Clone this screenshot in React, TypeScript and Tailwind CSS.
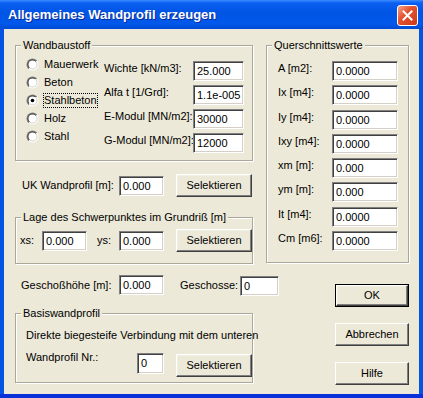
import React from 'react';

const ui = "font-['Liberation_Sans',Arial,sans-serif] text-[11px] leading-[13px] text-black";

function Edit({ value, className }: { value: string; className: string }) {
  return (
    <div
      className={`h-[20px] shrink-0 bg-white border border-t-[#808080] border-l-[#808080] border-b-white border-r-white shadow-[inset_1px_1px_0_#404040,inset_-1px_-1px_0_#d4d0c8] pl-[3px] leading-[18px] ${className}`}
    >
      {value}
    </div>
  );
}

function Btn({ children, isDefault }: { children: React.ReactNode; isDefault?: boolean }) {
  const face = (
    <div className="h-full w-full flex items-center justify-center bg-[#ece9d8] border border-t-white border-l-white border-r-[#404040] border-b-[#404040] shadow-[inset_-1px_-1px_0_#808080,inset_1px_1px_0_#f1efe2]">
      {children}
    </div>
  );
  if (isDefault) {
    return <div className="w-[74px] h-[23px] border border-black">{face}</div>;
  }
  return <div className="w-[76px] h-[23px]">{face}</div>;
}

function Radio({ checked }: { checked?: boolean }) {
  return (
    <svg width="13" height="13" viewBox="0 0 13 13" className="shrink-0">
      <defs>
        <linearGradient id="ro" x1="0" y1="0" x2="1" y2="1">
          <stop offset="0.5" stopColor="#808080" />
          <stop offset="0.5" stopColor="#ffffff" />
        </linearGradient>
        <linearGradient id="ri" x1="0" y1="0" x2="1" y2="1">
          <stop offset="0.5" stopColor="#404040" />
          <stop offset="0.5" stopColor="#d4d0c8" />
        </linearGradient>
      </defs>
      <circle cx="6.5" cy="6.5" r="6" fill="url(#ro)" />
      <circle cx="6.5" cy="6.5" r="5" fill="url(#ri)" />
      <circle cx="6.5" cy="6.5" r="4" fill="#ffffff" />
      {checked && <circle cx="6.5" cy="6.5" r="1.8" fill="#000000" />}
    </svg>
  );
}

function Group({ title, className, children }: { title: string; className: string; children: React.ReactNode }) {
  return (
    <div className={`relative border border-[#aca899] shadow-[inset_1px_1px_0_#ffffff,1px_1px_0_#ffffff] ${className}`}>
      <span className="absolute -top-[7px] left-[5px] px-[2px] bg-[#ece9d8] leading-[13px] whitespace-nowrap">{title}</span>
      {children}
    </div>
  );
}

const materials = ['Mauerwerk', 'Beton', 'Stahlbeton', 'Holz', 'Stahl'];

const props = [
  ['Wichte [kN/m3]:', '25.000'],
  ['Alfa t [1/Grd]:', '1.1e-005'],
  ['E-Modul [MN/m2]:', '30000'],
  ['G-Modul [MN/m2]:', '12000'],
];

const section = [
  ['A [m2]:', '0.0000'],
  ['Ix [m4]:', '0.0000'],
  ['Iy [m4]:', '0.0000'],
  ['Ixy [m4]:', '0.0000'],
  ['xm [m]:', '0.000'],
  ['ym [m]:', '0.000'],
  ['It [m4]:', '0.0000'],
  ['Cm [m6]:', '0.0000'],
];

function SideBtn({ children }: { children: React.ReactNode }) {
  return (
    <div className="w-[74px] h-[23px]">
      <div className="h-full w-full flex items-center justify-center border border-t-white border-l-white border-r-[#404040] border-b-[#404040] shadow-[inset_-1px_-1px_0_#808080]">
        {children}
      </div>
    </div>
  );
}

export default function App() {
  return (
    <div className={`w-[423px] h-[398px] flex flex-col bg-[#0553e3] ${ui}`}>
      {/* title bar */}
      <div className="h-[29px] shrink-0 flex items-center pl-[8px] pr-[5px] bg-[linear-gradient(180deg,#3d8cff_0px,#0a5ff0_3px,#0055e5_12px,#0258ea_24px,#0049d3_29px)]">
        <span className="flex-1 text-white font-bold text-[13px] leading-[16px] [text-shadow:1px_1px_#0b2a9a]">
          Allgemeines Wandprofil erzeugen
        </span>
        <div className="w-[21px] h-[21px] mt-[2px] rounded-[3px] border border-white bg-[linear-gradient(135deg,#f3a58d_0%,#e5532f_40%,#c93a1a_100%)] flex items-center justify-center">
          <svg width="11" height="11" viewBox="0 0 11 11">
            <path d="M1.5 1.5 L9.5 9.5 M9.5 1.5 L1.5 9.5" stroke="#ffffff" strokeWidth="2" strokeLinecap="square" />
          </svg>
        </div>
      </div>

      {/* client */}
      <div className="flex-1 mx-[4px] bg-[#ece9d8] pt-[16px] pl-[11px] pr-[10px]">
        {/* upper area */}
        <div className="flex gap-[13px]">
          <div className="w-[238px] flex flex-col">
            <Group title="Wandbaustoff" className="h-[116px] flex">
              <div className="w-[88px] pl-[10px] pt-[9px] flex flex-col">
                {materials.map((m, i) => (
                  <div key={m} className="h-[18px] flex items-center gap-[5px]">
                    <Radio checked={i === 2} />
                    <span className={i === 2 ? 'outline outline-1 outline-dotted outline-black' : ''}>{m}</span>
                  </div>
                ))}
              </div>
              <div className="pt-[15px] grid grid-cols-[89px_51px] gap-y-[4px] h-fit">
                {props.map(([l, v]) => (
                  <React.Fragment key={l}>
                    <span className="leading-[15px] whitespace-nowrap">{l}</span>
                    <Edit value={v} className="w-[51px]" />
                  </React.Fragment>
                ))}
              </div>
            </Group>

            <div className="mt-[13px] h-[23px] flex items-center pl-[7px]">
              <span className="w-[97px] shrink-0">UK Wandprofil [m]:</span>
              <Edit value="0.000" className="w-[45px]" />
              <div className="ml-[12px]">
                <Btn>Selektieren</Btn>
              </div>
            </div>

            <Group title="Lage des Schwerpunktes im Grundriß [m]" className="mt-[20px] h-[47px] pt-[11px] pl-[4px]">
              <div className="h-[23px] flex items-center">
                <span className="w-[22px] shrink-0">xs:</span>
                <Edit value="0.000" className="w-[45px]" />
                <span className="ml-[10px] w-[22px] shrink-0">ys:</span>
                <Edit value="0.000" className="w-[45px]" />
                <div className="ml-[12px]">
                  <Btn>Selektieren</Btn>
                </div>
              </div>
            </Group>
          </div>

          <Group title="Querschnittswerte" className="w-[144px] h-[218px] pt-[15px] pl-[11px]">
            <div className="grid grid-cols-[54px_66px] gap-y-[4.3px]">
              {section.map(([l, v]) => (
                <React.Fragment key={l}>
                  <span className="leading-[15px]">{l}</span>
                  <Edit value={v} className="w-[66px]" />
                </React.Fragment>
              ))}
            </div>
          </Group>
        </div>

        {/* lower area */}
        <div className="flex justify-between">
          <div className="w-[238px] flex flex-col">
            <div className="mt-[10px] h-[22px] flex items-center pl-[6px] whitespace-nowrap">
              <span className="w-[98px] shrink-0">Geschoßhöhe [m]:</span>
              <Edit value="0.000" className="w-[45px]" />
              <span className="ml-[16px] w-[60px] shrink-0">Geschosse:</span>
              <Edit value="0" className="w-[39px] mt-[2px]" />
            </div>

            <Group title="Basiswandprofil" className="mt-[17px] h-[70px] pt-[15px] pl-[10px]">
              <div className="whitespace-nowrap">Direkte biegesteife Verbindung mit dem unteren</div>
              <div className="mt-[9px] flex items-start">
                <span className="w-[111px] shrink-0">Wandprofil Nr.:</span>
                <Edit value="0" className="w-[27px] h-[21px] mt-[2px]" />
                <div className="ml-[12px] mt-[3px]">
                  <Btn>Selektieren</Btn>
                </div>
              </div>
            </Group>
          </div>

          <div className="flex flex-col pt-[20px] gap-[16px]">
            <Btn isDefault>OK</Btn>
            <SideBtn>Abbrechen</SideBtn>
            <SideBtn>Hilfe</SideBtn>
          </div>
        </div>
      </div>
      <div className="h-[4px] shrink-0 bg-[#0831d9]" />
    </div>
  );
}
